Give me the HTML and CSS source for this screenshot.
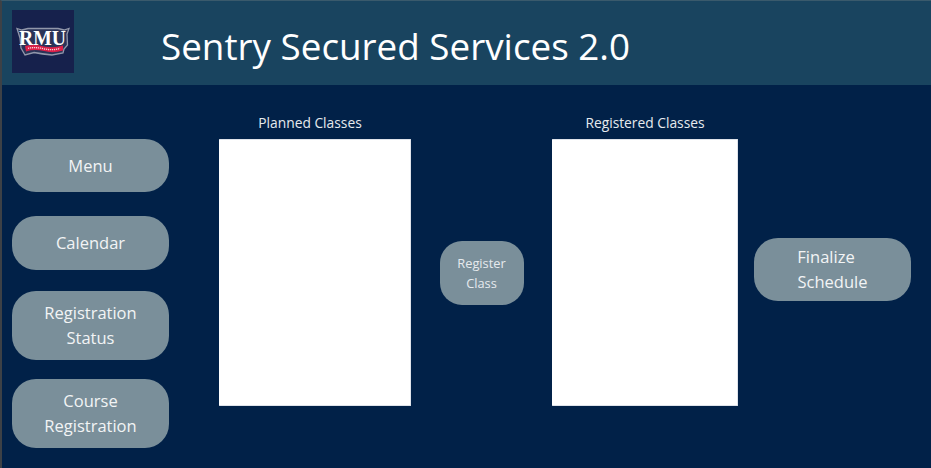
FILE: index.html
```html
<!DOCTYPE html>
<html lang="en">
<head>
    <meta charset="UTF-8">
    <meta name="viewport" content="width=device-width, initial-scale=1.0">
    <title>Sentry Secured Services 2.0</title>
    <link rel="stylesheet" href="styles.css">
</head>
<body>
    <div class="app">
        <header class="header">
            <div class="logo">
                <svg width="62" height="63" viewBox="0 0 62 63">
                    <!-- RMU wordmark -->
                    <path d="M5 18.500 L10 20 L16 18.500 L46 18.500 L52 20 L57 18.500 L55 24 L55.500 35 L52 39 L51 43 L40 45 Q30 44 22 42.500 L13 45 L9 38 L8 28 Z" fill="#2a3358" stroke="#9197aa" stroke-width="1.300"/>
                    <text class="logo-text" x="30.500" y="35" text-anchor="middle" textLength="47" lengthAdjust="spacingAndGlyphs">RMU</text>
                    <path d="M13 36 Q22 34 32 36.500 Q42 38.500 51 35.500 L51 40.500 Q41 43.500 32 41 Q22 39 14 41.500 Z" fill="#dc1f48"/>
                    <!-- banner lettering, too small to read at this size -->
                    <path d="M16 38.300 Q23 36.800 32 38.800 Q41 40.800 48 38.400" fill="none" stroke="#f6d5da" stroke-width="1.300" stroke-dasharray="1.200 0.800"/>
                </svg>
            </div>
            <h1 class="title">Sentry Secured Services 2.0</h1>
        </header>

        <main class="main">
            <nav class="sidebar">
                <button class="btn btn-menu">Menu</button>
                <button class="btn btn-calendar">Calendar</button>
                <button class="btn btn-status">Registration<br>Status</button>
                <button class="btn btn-course">Course<br>Registration</button>
            </nav>

            <section class="list-col planned">
                <h2 class="list-label">Planned Classes</h2>
                <div class="list-box"></div>
            </section>

            <div class="action-col register">
                <button class="btn-small">Register<br>Class</button>
            </div>

            <section class="list-col registered">
                <h2 class="list-label">Registered Classes</h2>
                <div class="list-box"></div>
            </section>

            <div class="action-col finalize">
                <button class="btn btn-finalize"><span class="finalize-first">Finalize</span><br>Schedule</button>
            </div>
        </main>
    </div>
</body>
</html>
```

FILE: styles.css
```css
html, body {
    margin: 0;
    padding: 0;
    height: 100%;
}
body {
    font-family: "Open Sans", "Noto Sans", sans-serif;
    background-color: #012148;
    overflow: hidden;
}
.app {
    height: 468px;
    box-sizing: border-box;
    border-left: 2px solid #3d4146;
    border-top: 1px solid #3a5a6c;
    display: flex;
    flex-direction: column;
}
.header {
    height: 84px;
    background-color: #19445f;
    display: flex;
    align-items: flex-start;
}
.logo {
    width: 62px;
    height: 63px;
    margin: 9px 0 0 10px;
    background-color: #16214c;
}
.logo svg {
    display: block;
}
.logo-text {
    font-family: "Liberation Serif", serif;
    font-weight: 700;
    font-size: 20px;
    fill: #ffffff;
}
.title {
    margin: 20px 0 0 87px;
    font-size: 36.800px;
    line-height: 50px;
    font-weight: 400;
    color: #ffffff;
    white-space: nowrap;
}
.main {
    flex: 1;
    display: flex;
    align-items: flex-start;
}
.sidebar {
    width: 157px;
    margin: 54px 0 0 10px;
    display: flex;
    flex-direction: column;
}
.btn {
    width: 157px;
    border: none;
    border-radius: 24px;
    padding: 0 0 2px;
    background-color: #7a8f9a;
    color: #f2f4f5;
    font-family: inherit;
    font-size: 16.500px;
    line-height: 25px;
}
.btn-menu {
    height: 53px;
    padding: 0;
}
.btn-calendar {
    height: 54px;
    margin-top: 24px;
}
.btn-status {
    height: 69px;
    margin-top: 21px;
}
.btn-course {
    height: 69px;
    margin-top: 19px;
}
.list-col {
    display: flex;
    flex-direction: column;
    margin-top: 26px;
}
.planned {
    width: 192px;
    margin-left: 50px;
}
.registered {
    width: 186px;
}
.list-label {
    margin: 0 0 5px;
    height: 23px;
    font-size: 13.800px;
    line-height: 24px;
    font-weight: 400;
    text-align: center;
    color: #e6eaee;
}
.planned .list-label {
    padding-right: 10px;
}
.list-box {
    height: 267px;
    box-sizing: border-box;
    background-color: #ffffff;
    border: 1px solid #dfe3ea;
    border-left-color: #ffffff;
    border-radius: 1px;
}
.action-col {
    display: flex;
}
.register {
    width: 141px;
    padding-top: 156px;
    justify-content: center;
}
.btn-small {
    width: 84px;
    height: 64px;
    border: none;
    border-radius: 22px;
    padding: 0;
    background-color: #7a8f9a;
    color: #e6eaee;
    font-family: inherit;
    font-size: 12.800px;
    line-height: 20px;
}
.finalize {
    margin-left: 16px;
    padding-top: 153px;
}
.btn-finalize {
    height: 63px;
}
.finalize-first {
    padding-right: 13px;
}
```
